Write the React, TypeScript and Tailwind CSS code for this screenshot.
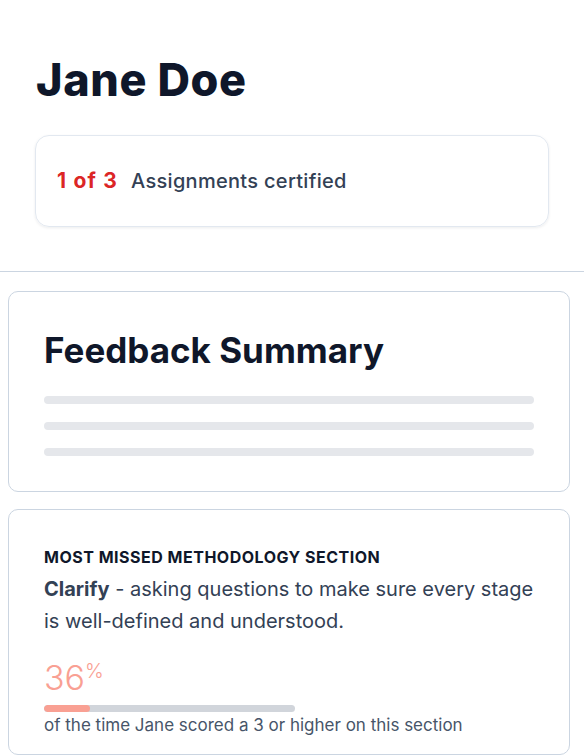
import React from "react";

export default function App() {
  return (
    <div className="w-[584px] h-[756px] overflow-hidden bg-white" style={{ fontFamily: "Inter, 'Noto Sans', sans-serif" }}>
      <div className="px-[36px] pt-[58px]">
        <h1 className="text-[45px] leading-[44px] font-extrabold text-[#0f172a] tracking-[0.6px]">Jane Doe</h1>
        <div className="mt-[33px] h-[92px] rounded-[14px] border border-[#e2e8f0] shadow-[0_1px_3px_rgba(15,23,42,0.08)] flex items-center px-[21px] -ml-px w-[514px]">
          <span className="text-[21px] font-bold text-[#dc2626] tracking-[1.2px]">1 of 3</span>
          <span className="ml-[13px] text-[20px] font-medium text-[#334155] tracking-[0.3px]">Assignments certified</span>
        </div>
      </div>
      <div className="mt-[44px] h-px bg-[#cbd5e1]" />
      <div className="ml-[8px] w-[562px] mt-[19px] h-[201px] rounded-[10px] border border-[#cbd5e1] px-[35px] pt-[38px]">
        <h2 className="text-[35px] leading-[40px] font-bold text-[#0f172a]">Feedback Summary</h2>
        <div className="mt-[26px] flex flex-col gap-[18px]">
          <div className="h-[8px] rounded-full bg-[#e5e7eb]" />
          <div className="h-[8px] rounded-full bg-[#e5e7eb]" />
          <div className="h-[8px] rounded-full bg-[#e5e7eb]" />
        </div>
      </div>
      <div className="ml-[8px] w-[562px] mt-[17px] rounded-[10px] border border-[#cbd5e1] px-[35px] pt-[37px] pb-[17px]">
        <div className="text-[16px] leading-[20px] font-bold uppercase text-[#0f172a] tracking-[0.5px]">Most missed methodology section</div>
        <p className="mt-[6px] text-[20px] leading-[32px] text-[#334155]">
          <span className="font-bold">Clarify</span> - asking questions to make sure every stage is well-defined and understood.
        </p>
        <div className="mt-[21px] flex items-start text-[#f9a093]">
          <span className="text-[34px] leading-[40px] font-light">36</span>
          <span className="text-[20px] leading-[26px] font-light">%</span>
        </div>
        <div className="mt-[7px] w-[251px] h-[7px] rounded-full bg-[#d1d5db] overflow-hidden">
          <div className="h-full rounded-full bg-[#f9a093]" style={{ width: "18.5%" }} />
        </div>
        <div className="mt-[1px] text-[17px] leading-[24px] text-[#475569]">of the time Jane scored a 3 or higher on this section</div>
      </div>
    </div>
  );
}
